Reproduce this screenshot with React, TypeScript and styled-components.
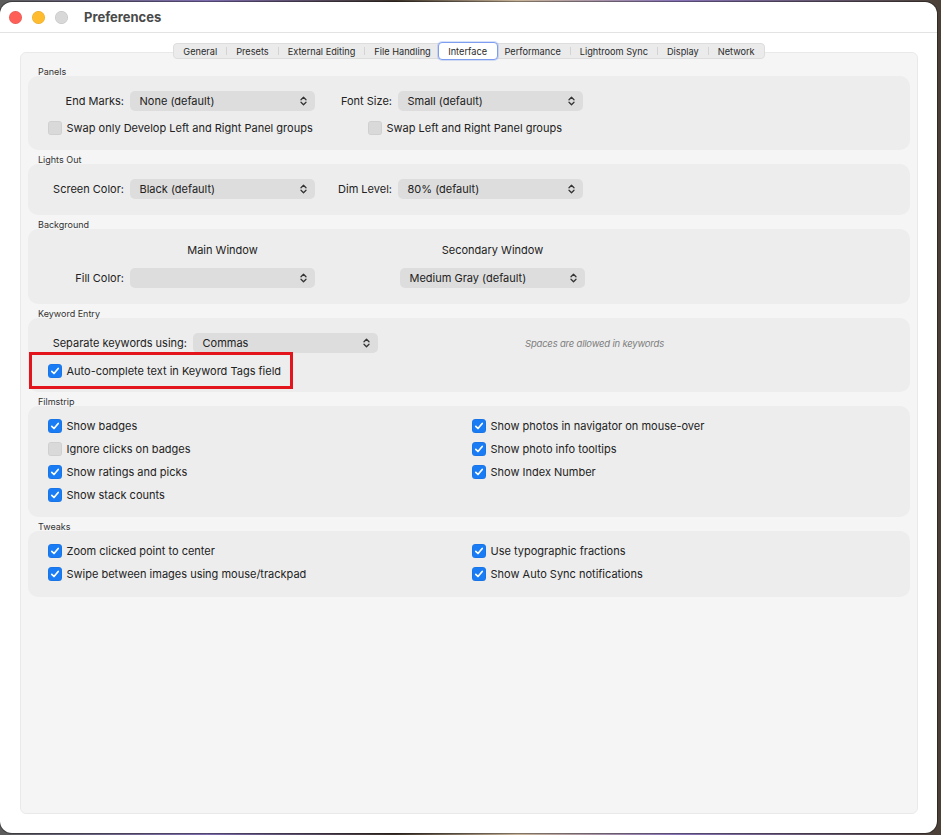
import React from "react";
import styled, { createGlobalStyle } from "styled-components";

const GlobalStyle = createGlobalStyle`
  *, *::before, *::after { box-sizing: border-box; }
  html, body { margin: 0; padding: 0; }
  body {
    width: 941px;
    height: 835px;
    overflow: hidden;
    padding-top: 2px;
    background: linear-gradient(90deg, #5b5b5b 0%, #7d6cae 22%, #3b3128 42%, #c9b59a 55%, #8773b6 72%, #4a4036 100%);
    font-family: Inter, "Liberation Sans", sans-serif;
    color: #222;
    -webkit-font-smoothing: antialiased;
  }
`;

const Window = styled.div`
  width: 937px;
  height: 831px;
  background: #fff;
  border-radius: 12px;
  box-shadow: 0 0 0 1px rgba(0, 0, 0, 0.35);
  display: flex;
  flex-direction: column;
  overflow: hidden;
`;

const TitleBar = styled.header`
  height: 31px;
  flex-shrink: 0;
  border-bottom: 1px solid #e3e3e3;
  display: flex;
  align-items: center;
  gap: 10px;
  padding-left: 9px;
`;

const Light = styled.span<{ $color: string }>`
  width: 13px;
  height: 13px;
  border-radius: 50%;
  background: ${(p) => p.$color};
  box-shadow: inset 0 0 0 0.5px rgba(0, 0, 0, 0.12);
`;

const Title = styled.h1`
  margin: 0 0 0 6px;
  font-size: 13px;
  font-weight: 700;
  color: #4a4a4a;
`;

const Body = styled.div`
  flex: 1;
  display: flex;
  flex-direction: column;
  padding: 0 19px 19px 20px;
`;

const TabRow = styled.nav`
  margin-top: 10px;
  display: flex;
  justify-content: center;
  position: relative;
  z-index: 1;
`;

const TabBar = styled.div`
  height: 16px;
  display: inline-flex;
  align-items: center;
  background: #ebebeb;
  border: 1px solid #dddddd;
  border-radius: 4px;
`;

const Tab = styled.span<{ $active?: boolean }>`
  font-size: 9.2px;
  color: #2a2a2a;
  display: flex;
  align-items: center;
  white-space: nowrap;
  ${(p) =>
    p.$active
      ? `
    height: 18px;
    margin: 0 -2px;
    padding: 0 9.5px;
    background: #fff;
    border: 1.5px solid #7d9df0;
    border-radius: 4px;
    box-shadow: 0 0 0 1px rgba(125, 157, 240, 0.3);
  `
      : `
    height: 100%;
    padding: 0 9px;
  `}
`;

const TabSep = styled.i`
  width: 1px;
  height: 8px;
  background: #d3d3d3;
`;

const ContentBox = styled.main`
  flex: 1;
  margin-top: -7px;
  background: #f5f5f5;
  border: 1px solid #e9e9e9;
  border-radius: 6px;
  padding: 14px 7px 0;
`;

const Section = styled.section`
  & + & {
    margin-top: 5px;
  }
`;

const SectionTitle = styled.h2`
  margin: 0;
  padding-left: 10px;
  font-size: 9px;
  line-height: 9px;
  height: 9px;
  font-weight: 400;
  color: #333;
`;

const Group = styled.div<{ $padding: string; $gap?: number }>`
  background: #ededed;
  border-radius: 10px;
  padding: ${(p) => p.$padding};
  display: flex;
  flex-direction: column;
  gap: ${(p) => p.$gap ?? 0}px;
`;

const FieldRow = styled.div<{ $h?: number }>`
  display: flex;
  align-items: center;
  height: ${(p) => p.$h ?? 20}px;
`;

const FieldWrap = styled.div`
  display: flex;
  align-items: center;
  gap: 6px;
`;

const FieldLabel = styled.span<{ $w: number }>`
  width: ${(p) => p.$w}px;
  text-align: right;
  font-size: 11px;
  white-space: nowrap;
`;

const SelectBox = styled.div`
  width: 185px;
  height: 20px;
  background: #dddddd;
  border-radius: 5px;
  padding: 0 8px 0 9.5px;
  display: flex;
  align-items: center;
  justify-content: space-between;
  font-size: 11px;
  color: #222;
`;

const ColumnHeader = styled.span`
  width: 185px;
  text-align: center;
  font-size: 11px;
  line-height: 14px;
`;

const Hint = styled.span`
  margin-left: 147px;
  font-size: 9.5px;
  font-style: italic;
  color: #7d7d7d;
  letter-spacing: -0.2px;
`;

const CheckGrid = styled.div<{ $cols: string }>`
  display: grid;
  grid-template-columns: ${(p) => p.$cols};
  row-gap: 7px;
  padding-left: 20px;
`;

const CheckLabel = styled.label`
  display: flex;
  align-items: center;
  gap: 4.5px;
  height: 16px;
  font-size: 11px;
  white-space: nowrap;
`;

const Box = styled.span<{ $checked: boolean }>`
  width: 14px;
  height: 14px;
  border-radius: 3.5px;
  flex-shrink: 0;
  display: flex;
  align-items: center;
  justify-content: center;
  background: ${(p) => (p.$checked ? "#1a7cf5" : "#d9d9d9")};
  box-shadow: inset 0 0 0 0.5px rgba(0, 0, 0, ${(p) => (p.$checked ? 0.1 : 0.08)});
`;

const Highlight = styled.div`
  width: 264px;
  height: 37px;
  margin: -1px 0 0 1px;
  border: 3px solid #e3141c;
  padding-left: 16px;
  display: flex;
  align-items: center;
`;

const Chevron = () => (
  <svg width="7" height="10" viewBox="0 0 7 10" fill="none" stroke="#333" strokeWidth="1.3" strokeLinecap="round" strokeLinejoin="round">
    <path d="M1 3.8 L3.5 1.3 L6 3.8" />
    <path d="M1 6.2 L3.5 8.7 L6 6.2" />
  </svg>
);

const Select = ({ value }: { value: string }) => (
  <SelectBox>
    <span>{value}</span>
    <Chevron />
  </SelectBox>
);

const Field = ({ label, w, children }: { label: string; w: number; children: React.ReactNode }) => (
  <FieldWrap>
    <FieldLabel $w={w}>{label}</FieldLabel>
    {children}
  </FieldWrap>
);

const Check = ({ label, checked = true }: { label: string; checked?: boolean }) => (
  <CheckLabel>
    <Box $checked={checked}>
      {checked && (
        <svg width="10" height="10" viewBox="0 0 10 10" fill="none" stroke="#fff" strokeWidth="1.7" strokeLinecap="round" strokeLinejoin="round">
          <path d="M1.8 5.3 L4 7.5 L8.2 2.5" />
        </svg>
      )}
    </Box>
    {label}
  </CheckLabel>
);

const tabs = ["General", "Presets", "External Editing", "File Handling", "Interface", "Performance", "Lightroom Sync", "Display", "Network"];
const activeTab = "Interface";

const filmstrip: [string, boolean][] = [
  ["Show badges", true],
  ["Show photos in navigator on mouse-over", true],
  ["Ignore clicks on badges", false],
  ["Show photo info tooltips", true],
  ["Show ratings and picks", true],
  ["Show Index Number", true],
  ["Show stack counts", true],
];

const tweaks = [
  "Zoom clicked point to center",
  "Use typographic fractions",
  "Swipe between images using mouse/trackpad",
  "Show Auto Sync notifications",
];

function App(): JSX.Element {
  return (
    <>
      <GlobalStyle />
      <Window>
        <TitleBar>
          <Light $color="#fe5f57" />
          <Light $color="#febc2e" />
          <Light $color="#d8d8d8" />
          <Title>Preferences</Title>
        </TitleBar>
        <Body>
          <TabRow>
            <TabBar>
              {tabs.map((t, i) => {
                const prev = tabs[i - 1];
                const showSep = i > 0 && t !== activeTab && prev !== activeTab;
                return (
                  <React.Fragment key={t}>
                    {showSep && <TabSep />}
                    <Tab $active={t === activeTab}>{t}</Tab>
                  </React.Fragment>
                );
              })}
            </TabBar>
          </TabRow>
          <ContentBox>
            <Section>
              <SectionTitle>Panels</SectionTitle>
              <Group $padding="15px 0 14px" $gap={9}>
                <FieldRow>
                  <Field label="End Marks:" w={96}>
                    <Select value="None (default)" />
                  </Field>
                  <Field label="Font Size:" w={77}>
                    <Select value="Small (default)" />
                  </Field>
                </FieldRow>
                <CheckGrid $cols="320px 1fr">
                  <Check label="Swap only Develop Left and Right Panel groups" checked={false} />
                  <Check label="Swap Left and Right Panel groups" checked={false} />
                </CheckGrid>
              </Group>
            </Section>
            <Section>
              <SectionTitle>Lights Out</SectionTitle>
              <Group $padding="15px 0 16px">
                <FieldRow>
                  <Field label="Screen Color:" w={96}>
                    <Select value="Black (default)" />
                  </Field>
                  <Field label="Dim Level:" w={77}>
                    <Select value="80% (default)" />
                  </Field>
                </FieldRow>
              </Group>
            </Section>
            <Section>
              <SectionTitle>Background</SectionTitle>
              <Group $padding="14px 0 16px" $gap={11}>
                <FieldRow $h={14}>
                  <Field label="" w={96}>
                    <ColumnHeader>Main Window</ColumnHeader>
                  </Field>
                  <Field label="" w={79}>
                    <ColumnHeader>Secondary Window</ColumnHeader>
                  </Field>
                </FieldRow>
                <FieldRow>
                  <Field label="Fill Color:" w={96}>
                    <Select value="" />
                  </Field>
                  <Field label="" w={79}>
                    <Select value="Medium Gray (default)" />
                  </Field>
                </FieldRow>
              </Group>
            </Section>
            <Section>
              <SectionTitle>Keyword Entry</SectionTitle>
              <Group $padding="15px 0 3px">
                <FieldRow>
                  <Field label="Separate keywords using:" w={159}>
                    <Select value="Commas" />
                  </Field>
                  <Hint>Spaces are allowed in keywords</Hint>
                </FieldRow>
                <Highlight>
                  <Check label="Auto-complete text in Keyword Tags field" />
                </Highlight>
              </Group>
            </Section>
            <Section>
              <SectionTitle>Filmstrip</SectionTitle>
              <Group $padding="12px 0 14px">
                <CheckGrid $cols="424px 1fr">
                  {filmstrip.map(([label, checked]) => (
                    <Check key={label} label={label} checked={checked} />
                  ))}
                </CheckGrid>
              </Group>
            </Section>
            <Section>
              <SectionTitle>Tweaks</SectionTitle>
              <Group $padding="12px 0 15px">
                <CheckGrid $cols="424px 1fr">
                  {tweaks.map((label) => (
                    <Check key={label} label={label} />
                  ))}
                </CheckGrid>
              </Group>
            </Section>
          </ContentBox>
        </Body>
      </Window>
    </>
  );
}

export default App;
